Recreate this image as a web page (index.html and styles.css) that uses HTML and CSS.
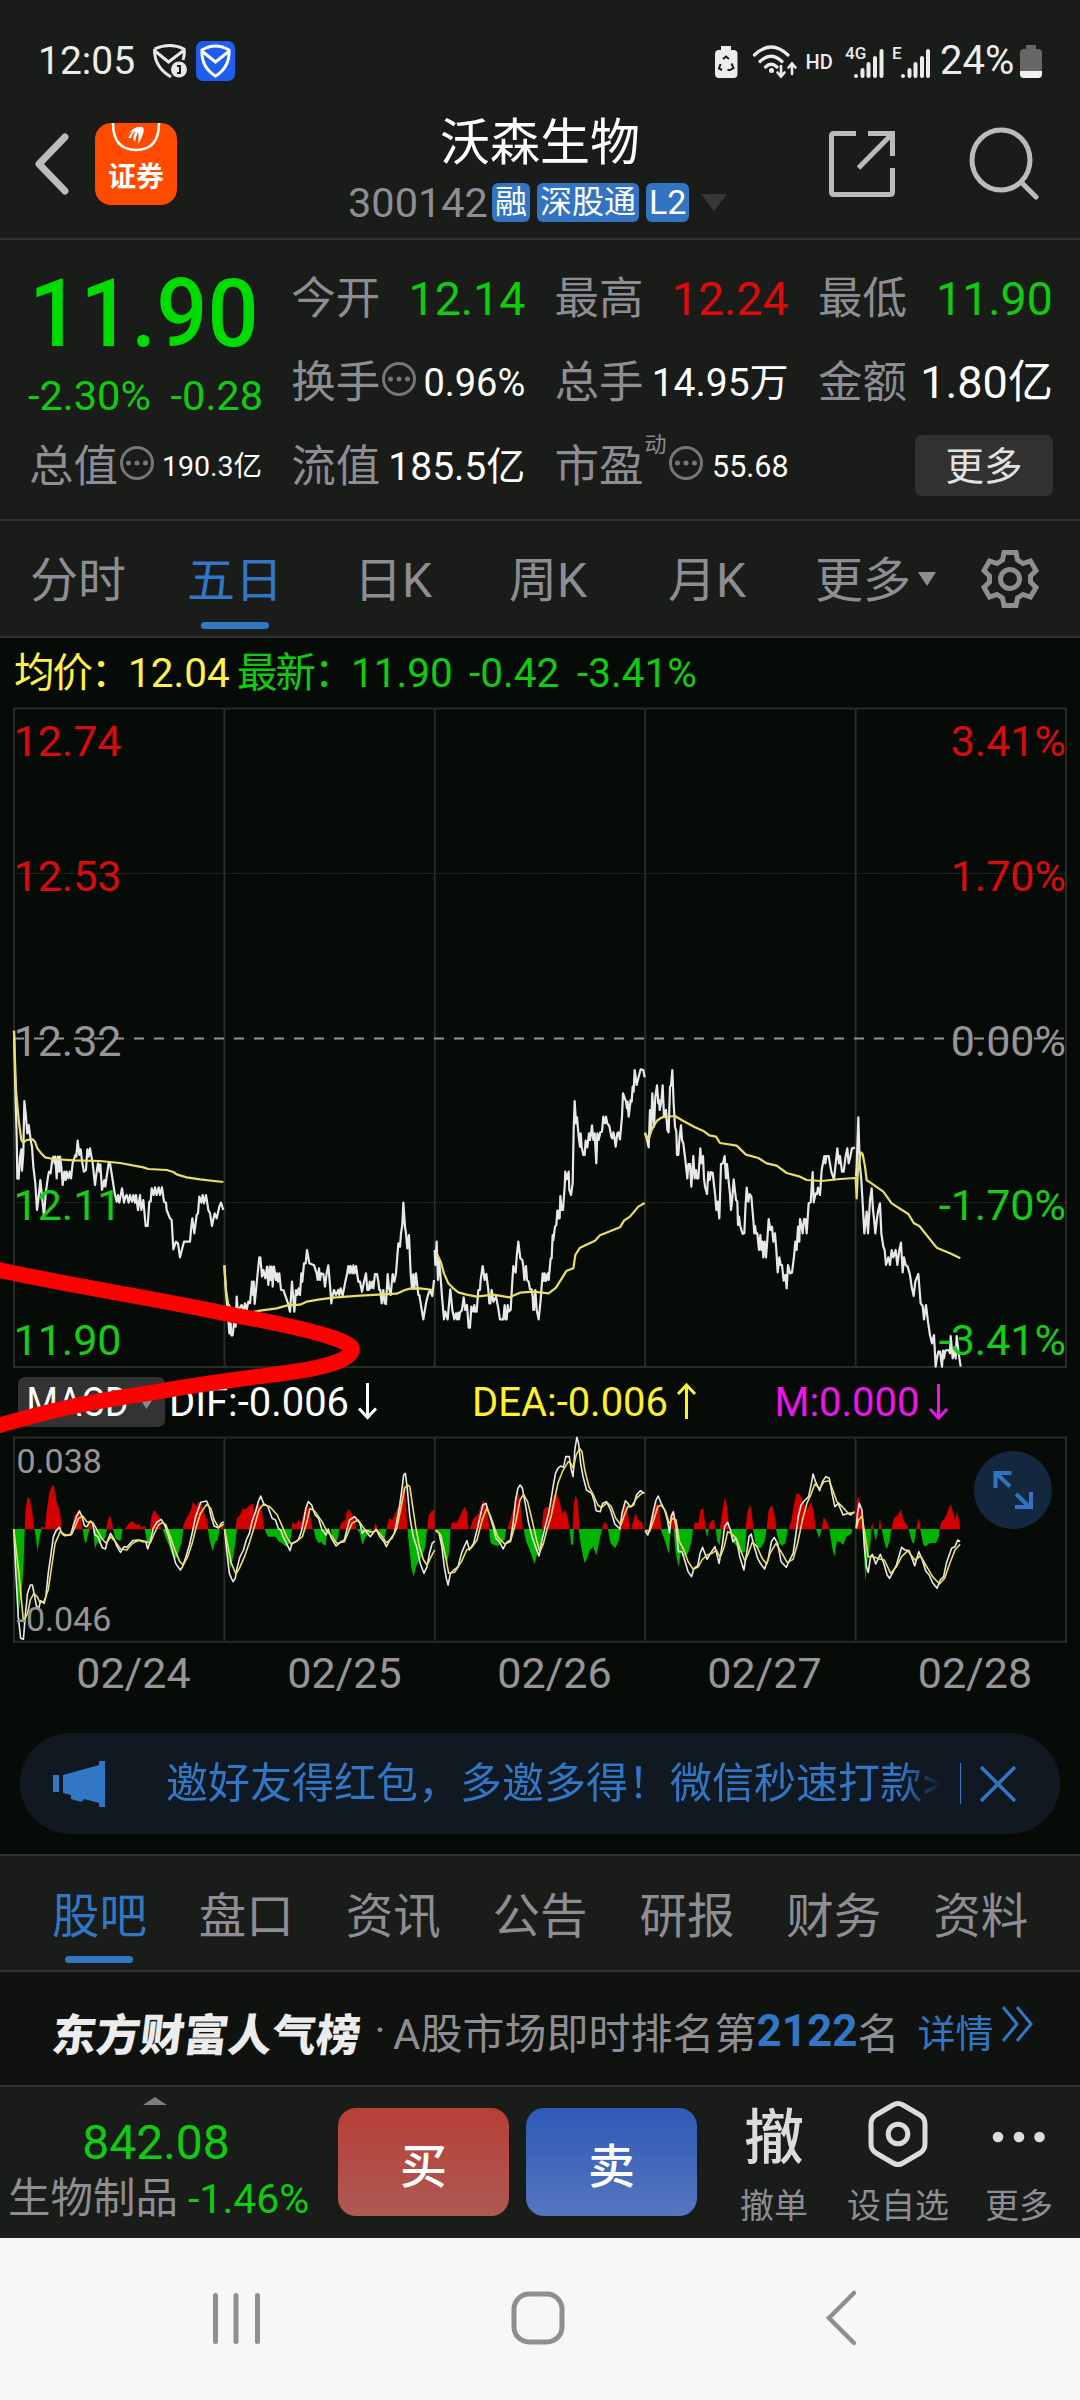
FILE: index.html
```html
<!DOCTYPE html>
<html lang="zh-CN">
<head>
<meta charset="utf-8">
<title>沃森生物 300142</title>
<link rel="stylesheet" href="styles.css">
</head>
<body>
<main class="screen">
  <div class="status">
    <span class="clock">12:05</span>
    <svg class="shield" width="36" height="36" viewBox="0 0 36 36" fill="none" stroke="#e8e8e8" stroke-width="3"><path d="M2.500 6Q18 -1 32 6Q33 11 31 17M2.500 6Q2 24 19 34M3 8L16.500 19L31 8"/><circle cx="27" cy="26.500" r="8" fill="#e8e8e8" stroke="none"/><path d="M25 23h3v7h-3" stroke="#191c19" stroke-width="2"/></svg>
    <svg width="39" height="40" viewBox="0 0 39 40"><rect width="39" height="40" rx="7" fill="#1f5cf0"/><path d="M6 9Q19.500 1 33 9Q34 26 19.500 35Q5 26 6 9ZM7 11L19.500 21L32 11" fill="none" stroke="#fff" stroke-width="3"/></svg>
    <svg class="signals" width="236" height="40" viewBox="710 40 236 40" fill="#ececec">
      <path d="M721 45h10v4h2.500q4 0 4 4v20q0 4-4 4h-14.500q-4 0-4-4v-20q0-4 4-4h2z"/>
      <path d="M720.500 63l-1.500 4.500 3 1.500M723 58l3-2.500 3 2.500M731.500 62.500l2 4.500-3.500 2h-2.500" fill="none" stroke="#191c19" stroke-width="2"/>
      <g fill="none" stroke="#ececec" stroke-width="3.200" stroke-linecap="round"><path d="M754.500 54Q771 38 788 54M760 60.500Q771 50 782 60.500M765.500 66Q771 60.500 777 66"/><path d="M781 65v9M777.500 71.500l3.500 4 3.500-4M792 73v-9M788.500 66.500l3.500-4 3.500 4" stroke-width="2.600"/></g>
      <circle cx="771.500" cy="69.500" r="2.500"/>
      <text x="805.500" y="67.500" font-size="20" font-weight="500">HD</text>
      <text x="845" y="57.500" font-size="17" font-weight="500">4G</text>
      <text x="892" y="57.500" font-size="17" font-weight="500">E</text>
      <g stroke="#ececec" stroke-width="4" stroke-linecap="round"><path d="M856 75v0M862.500 75v-6M868.500 75v-12M875 75v-18M881.500 75v-25M903 75v0M909.500 75v-6M915.500 75v-12M922 75v-18M928 75v-25"/></g>
    </svg>
    <span class="level">24%</span>
    <svg width="22" height="33" viewBox="0 0 22 33"><path d="M6 0h10v4h2q4 0 4 4v21q0 4-4 4H4q-4 0-4-4V8q0-4 4-4h2z" fill="#666866"/><path d="M0 26h22v3q0 4-4 4H4q-4 0-4-4z" fill="#f2f2f2"/></svg>
  </div>

  <header class="top">
    <svg class="back" width="36" height="64" viewBox="0 0 36 64"><path d="M32 5L6 32L32 59" fill="none" stroke="#bdbdbd" stroke-width="7" stroke-linecap="round" stroke-linejoin="round"/></svg>
    <div class="broker">
      <svg width="82" height="34" viewBox="0 0 82 34"><path d="M18 0Q18 27 41 27Q64 27 64 0" fill="none" stroke="#fff" stroke-width="2.500"/><path d="M32 12Q40 2 47 4Q50 5 48 11Q46 17 43 21Q44 11 43 9Q41 13 40 19Q39 17 38 15Q40 10 40 8Q37 11 36 15L33 15Q36 10 38 8Q35 9 32 12Z" fill="#fff"/></svg>
      <b>证券</b>
    </div>
    <div class="title">
      <h1>沃森生物</h1>
      <div class="code"><span>300142</span><i>融</i><i>深股通</i><i>L2</i><svg width="26" height="17" viewBox="0 0 26 17"><path d="M0 0h26L13 17z" fill="#363736"/></svg></div>
    </div>
    <svg class="share" width="68" height="68" viewBox="0 0 68 68" fill="none" stroke="#bbb" stroke-width="5"><path d="M28 3.500H6Q3.500 3.500 3.500 6V62Q3.500 64.500 6 64.500H62Q64.500 64.500 64.500 62V38M40 3.500H64.500V26M64 4L30.500 38"/></svg>
    <svg class="search" width="72" height="74" viewBox="0 0 72 74" fill="none" stroke="#bbb" stroke-width="5"><ellipse cx="33" cy="34" rx="29" ry="30"/><path d="M53 56L68 71" stroke-linecap="round"/></svg>
  </header>

  <section class="quote">
    <div class="now"><strong>11.90</strong><p><span>-2.30%</span><span>-0.28</span></p></div>
    <div class="cell"><label>今开</label><b class="v47 g">12.14</b></div>
    <div class="cell"><label>最高</label><b class="v47 r">12.24</b></div>
    <div class="cell"><label>最低</label><b class="v47 g">11.90</b></div>
    <div class="cell"><label>换手</label><svg class="info" viewBox="0 0 34 34"><circle cx="17" cy="17" r="15.500"/><path d="M8.500 17h0M17 17h0M25.500 17h0"/></svg><b class="v38">0.96%</b></div>
    <div class="cell"><label>总手</label><b class="v39">14.95万</b></div>
    <div class="cell"><label>金额</label><b class="v45">1.80亿</b></div>
    <div class="cell"><label>总值</label><svg class="info" viewBox="0 0 34 34"><circle cx="17" cy="17" r="15.500"/><path d="M8.500 17h0M17 17h0M25.500 17h0"/></svg><b class="v28">190.3亿</b></div>
    <div class="cell"><label>流值</label><b class="v39">185.5亿</b></div>
    <div class="cell"><label>市盈</label><sup>动</sup><svg class="info" viewBox="0 0 34 34"><circle cx="17" cy="17" r="15.500"/><path d="M8.500 17h0M17 17h0M25.500 17h0"/></svg><b class="v30">55.68</b></div>
    <div class="cell end"><button class="more">更多</button></div>
  </section>

  <nav class="periods">
    <a>分时</a><a class="on">五日</a><a>日K</a><a>周K</a><a>月K</a><a>更多<svg width="18" height="14" viewBox="0 0 18 14"><path d="M0 0h18L9 14z" fill="#8e8d93"/></svg></a>
    <svg class="gear" width="60" height="60" viewBox="0 0 60 60" fill="none" stroke="#8e8d93" stroke-width="5"><path d="M24 3.500H36L37.500 11L43 14.500L50.500 12L56 21.500L50.500 27V33L56 38.500L50.500 48L43 45.500L37.500 49L36 56.500H24L22.500 49L17 45.500L9.500 48L4 38.500L9.500 33V27L4 21.500L9.500 12L17 14.500L22.500 11Z"/><circle cx="30" cy="30" r="9.500"/></svg>
  </nav>

  <section class="charts">
    <div class="legend"><span class="y">均价：</span><span class="y n1">12.04</span><span class="g">最新：</span><span class="g n2">11.90</span><span class="g n3">-0.42</span><span class="g">-3.41%</span></div>
    <svg class="plot" width="1080" height="1012" viewBox="0 706 1080 1012">
      <g fill="none" stroke="#292b29" stroke-width="2">
        <path d="M14 708.500H1066V1367H14ZM224.500 708V1367M434.700 708V1367M645.200 708V1367M855.600 708V1367"/>
        <path d="M14 1437.500H1066V1641.700H14ZM224.500 1437V1642M434.700 1437V1642M645.200 1437V1642M855.600 1437V1642"/>
        <path d="M14 873.500H1066M14 1202.500H1066" stroke-width="1" stroke-dasharray="1 1.500" stroke="#3a3c3a"/>
      </g>
      <path d="M14 1038.500H1066" stroke="#969696" stroke-width="2" stroke-dasharray="10 10"/>
      <g class="line white">
        <g transform="translate(0 980) scale(.33333)">
          <polyline points="42,152 46,330 50,470 52,596 56,596 60,530 64,508 66,572 70,520 73,363 77,400 82,460 86,435 92,480 96,500 100,560 106,610 111,690 117,640 121,600 126,650 132,710 137,640 144,590 147,575 152,580 156,545 160,530 164,550 166,530 170,595 174,530 178,575 180,530 184,560 188,615 193,575 197,600 200,575 205,595 209,575 213,595 218,550 226,525 229,530 233,482 238,525 242,508 247,550 252,575 258,570 262,508 266,530 270,505 278,550 285,615 290,575 294,550 298,575 301,553 306,630 313,600 316,620 320,590 326,550 330,550 338,600 344,640 350,665 354,645 358,668 366,625 372,668 376,650 380,645 386,668 390,645 396,665 400,645 405,668 408,645 414,690 420,645 424,690 430,660 437,738 443,738 448,665 452,665 455,625 461,645 465,622 470,645 476,622 480,645 486,622 492,665 498,668 500,690 510,715 515,720 520,808 528,785 534,790 540,832 548,800 552,785 570,785 574,740 577,715 583,760 590,705 594,700 598,650 604,668 608,645 612,670 618,645 625,690 630,700 636,738 644,700 650,715 658,680 663,668 670,690"/>
          <polyline points="673,856 678,940 683,990 688,1060 692,1030 694,1066 698,1066 702,1030 707,1040 710,950 713,990 718,985 725,975 730,995 735,970 740,990 745,965 750,970 756,905 759,945 761,905 764,972 770,910 774,870 778,832 781,832 786,890 790,870 796,895 801,860 805,915 809,860 812,900 815,860 818,920 822,860 828,900 831,880 834,905 838,880 843,930 850,930 857,950 864,970 870,995 876,905 883,995 888,930 892,945 896,925 900,945 904,880 907,905 912,850 917,850 921,810 928,850 942,856 950,880 953,900 957,865 960,900 963,880 970,882 975,920 980,880 985,856 990,915 994,970 998,945 1002,930 1008,945 1015,930 1018,945 1022,925 1028,947 1035,910 1041,882 1045,858 1049,880 1052,858 1057,880 1060,856 1064,880 1068,858 1075,905 1080,905 1086,935 1092,905 1098,880 1102,930 1106,930 1109,905 1112,925 1117,905 1120,925 1125,882 1131,882 1135,905 1138,930 1141,930 1145,970 1150,930 1154,970 1158,972 1163,882 1167,925 1172,945 1178,882 1183,905 1188,880 1195,790 1200,800 1203,760 1207,735 1210,668 1215,740 1218,760 1222,805 1227,765 1232,880 1236,925 1240,882 1243,925 1248,880 1255,945 1258,945 1262,970 1270,1018 1278,970 1284,945 1290,930 1297,948 1302,900"/>
        </g>
        <g transform="translate(420 1020) scale(.33333)"><polyline points="44,690 46,735 50,665 54,780 57,720 61,760 66,830 72,898 76,875 83,898 91,808 97,870 103,898 108,880 111,898 115,878 117,898 120,878 126,870 131,832 136,870 141,855 146,923 150,923 154,860 160,875 163,855 166,875 170,875 175,810 180,810 182,780 188,738 194,780 199,762 205,810 208,850 211,850 215,810 220,845 228,830 234,860 240,898 250,898 254,855 257,898 260,898 263,855 266,875 272,870 276,800 280,738 287,758 290,710 295,665 301,715 307,720 310,740 313,780 318,738 321,780 326,785 330,808 335,808 338,830 340,870 342,870 346,810 350,870 356,898 362,840 366,785 368,760 371,783 374,760 378,783 383,760 386,780 392,715 395,715 398,645 400,660 405,620 409,615 412,572 415,595 417,572 419,595 421,528 425,570 429,570 434,500 436,455 440,478 446,455 448,510 453,525 458,490 461,330 464,243 468,310 471,292 476,350 480,380 482,340 485,380 490,405 494,405 497,362 502,382 507,340 510,360 513,340 516,316 520,360 524,340 529,430 532,340 536,360 541,337 546,335 550,290 555,310 558,290 562,310 568,318 574,350 577,355 580,337 583,350 587,380 592,340 595,337 600,358 606,290 609,220 618,245 621,265 623,245 626,290 632,240 635,245 638,200 641,215 644,150 650,195 656,170 662,148 670,150 674,172"/></g>
        <g transform="translate(640 1020) scale(.33333)">
          <polyline points="15,338 20,355 26,382 30,270 33,330 37,220 42,320 46,230 51,196 55,250 57,240 59,270 64,245 68,196 72,290 78,270 82,330 86,337 90,200 93,196 97,150 101,250 105,320 109,335 111,405 115,405 118,360 123,316 126,360 130,370 136,420 142,475 145,432 150,432 154,500 160,408 164,475 168,450 171,475 175,475 181,385 184,430 189,408 192,475 195,500 201,522 205,456 209,480 213,456 218,458 226,530 229,570 233,545 238,595 243,432 249,430 254,408 258,475 261,432 265,475 270,522 273,570 276,545 281,478 288,540 292,545 294,615 297,590 300,615 308,642 313,640 316,570 320,503 325,545 329,522 334,530 340,600 343,640 345,618 348,640 352,640 357,690 361,645 364,690 367,665 370,712 374,665 378,712 382,660 386,597 391,630 396,620 400,665 405,640 409,690 413,757 418,712 422,735 426,735 431,782 436,765 440,805 444,735 450,760 456,758 462,710 466,665 470,690 474,620 478,665 480,597 485,620 488,640 492,597 496,597 500,640 506,550 512,547 515,500 518,456 521,547 527,520 531,522 534,503 540,525 545,450 553,408 556,430 559,408 566,408 574,455 582,478 592,385 597,430 600,408 606,455 611,455 617,408 622,385 626,430 631,410 636,385 645,383"/>
          <polyline points="648,470 650,440 655,292 659,430 664,480 668,550 673,640 680,575 684,640 690,540 695,505 699,570 702,595 706,640 711,595 715,570 720,550 724,640 730,680 734,690 738,735 745,712 750,735 755,690 760,712 767,690 772,735 778,690 783,668 788,757 792,712 797,735 803,740 810,765 815,800 821,828 826,785 835,762 842,850 848,858 852,898 858,855 864,905 870,945 876,970 882,945 887,1040 890,1018 895,995 900,995 906,1040 909,992 912,1015 916,992 926,990 930,1000 932,948 938,1015 943,990 947,1015 950,948 956,1000 962,1040"/>
        </g>
      </g>
      <g class="line yellow">
        <g transform="translate(0 980) scale(.33333)"><polyline points="42,152 48,330 56,420 64,480 70,488 80,480 98,478 105,485 112,505 122,518 135,532 160,537 220,541 300,543 360,549 430,562 445,567 500,570 520,576 530,583 560,592 600,598 670,606"/><polyline points="673,856 678,930 684,970 700,1000 740,1000 780,992 830,985 862,976 900,974 920,965 960,958 1000,953 1080,947 1190,941 1215,930 1230,926 1260,925 1300,930"/></g>
        <g transform="translate(420 1020) scale(.33333)"><polyline points="50,700 62,725 72,760 85,790 100,805 115,817 140,824 170,830 220,824 268,832 300,818 340,815 386,820 408,803 440,752 460,745 466,705 480,683 525,662 540,646 600,622 612,602 630,590 655,560 674,549"/></g>
        <g transform="translate(640 1020) scale(.33333)"><polyline points="15,340 26,358 35,330 50,303 65,292 105,288 130,303 165,322 192,334 208,346 228,350 240,369 290,377 318,404 355,414 380,430 410,437 440,459 480,470 500,480 545,483 600,477 647,474 650,535 654,450 662,397 668,402 675,440 680,480 690,487 730,515 755,550 805,582 822,610 838,618 890,683 930,700 961,715"/></g>
      </g>
      <g font-size="43">
        <g fill="#d80c0c"><text x="13.500" y="755.500">12.74</text><text x="13.500" y="890.500">12.53</text><text x="1066" y="755.500" text-anchor="end">3.41%</text><text x="1066" y="890.500" text-anchor="end">1.70%</text></g>
        <g fill="#979597"><text x="13.500" y="1056">12.32</text><text x="1066" y="1056" text-anchor="end">0.00%</text></g>
        <g fill="#16cc16"><text x="13.500" y="1220">12.11</text><text x="13.500" y="1355">11.90</text><text x="1066" y="1220" text-anchor="end">-1.70%</text><text x="1066" y="1355" text-anchor="end">-3.41%</text></g>
      </g>

      <rect x="18" y="1377" width="147" height="50" rx="7" fill="#333"/>
      <path d="M140 1399h13l-6.500 10z" fill="#8a8a8a"/>
      <g font-size="40.500"><text x="26.500" y="1416" fill="#fff" textLength="102" lengthAdjust="spacingAndGlyphs">MACD</text><text x="169" y="1416" fill="#fff" textLength="180" lengthAdjust="spacingAndGlyphs">DIF:-0.006</text><text x="472" y="1416" fill="#fff02c" textLength="196" lengthAdjust="spacingAndGlyphs">DEA:-0.006</text><text x="774.500" y="1416" fill="#ee14ea" textLength="145" lengthAdjust="spacingAndGlyphs">M:0.000</text></g>
      <g fill="none" stroke-width="3"><path d="M367.500 1383v34M359 1408.500l8.500 9 8.500-9" stroke="#fff"/><path d="M686.500 1419v-34M678 1394l8.500-9 8.500 9" stroke="#fff02c"/><path d="M938.500 1384v34M930 1409l8.500 9 8.500-9" stroke="#ee14ea"/></g>

      <g transform="translate(0 1360) scale(.34439 .33333)">
        <path fill="#d40000" d="M72,508 74,450 80,412 86,415 92,445 98,490 100,508ZM118,508 120,500 128,502 130,508 136,450 143,400 148,385 155,373 160,400 166,435 172,445 178,490 180,508ZM208,508 215,470 222,460 230,447 234,470 240,508ZM252,508 262,485 268,508ZM308,508 314,480 319,463 325,490 329,508ZM362,508 375,490 385,484 395,495 405,492 410,503 420,497 425,508ZM435,508 440,470 447,450 455,462 463,470 467,508ZM530,508 538,480 548,465 556,445 560,425 570,440 577,425 585,430 595,465 602,480 606,508ZM640,508 645,485 650,508ZM683,508 688,475 697,465 705,445 712,450 720,440 728,435 735,430 739,460 750,425 757,440 762,460 767,508ZM846,508 850,485 858,495 868,480 875,488 882,460 888,440 893,428 899,455 905,490 908,508ZM985,508 990,490 1003,480 1006,460 1012,447 1020,460 1028,470 1033,500 1036,508ZM1084,508 1091,488 1097,508ZM1122,508 1130,475 1140,480 1150,455 1160,430 1168,395 1173,365 1178,410 1183,508ZM1240,508 1245,465 1254,452 1261,450 1262,508ZM1308,508 1314,485 1325,490 1335,470 1348,440 1356,455 1360,508ZM1364,508 1375,475 1388,465 1395,440 1403,420 1412,440 1418,480 1422,508ZM1473,508 1482,480 1490,450 1500,395 1505,400 1512,440 1518,508Z"/>
        <path fill="#00b400" d="M40,507 45,640 52,770 58,730 63,700 68,620 72,507ZM100,507 104,530 109,573 114,540 120,507ZM240,507 246,545 250,550 254,530 260,507ZM270,507 276,567 283,545 290,552 296,540 305,535 310,507ZM328,507 335,535 342,540 350,542 356,507ZM420,507 428,555 436,540 440,507ZM472,507 480,530 490,555 500,585 510,595 515,590 520,570 528,545 532,507ZM603,507 610,545 617,573 625,545 632,540 638,507ZM652,507 656,550 663,600 670,625 677,590 683,550 688,507ZM768,507 778,530 790,530 800,530 810,545 820,550 830,560 840,550 845,530 848,507ZM910,507 917,535 925,550 932,545 940,555 946,555 950,507ZM960,507 967,545 975,550 982,530 985,507ZM1036,507 1045,520 1052,555 1060,535 1066,525 1075,520 1080,507ZM1100,507 1108,530 1115,545 1122,507ZM1183,507 1188,560 1195,625 1201,652 1208,620 1218,600 1225,590 1235,560 1240,507ZM1264,507 1272,520 1282,560 1290,590 1298,612 1305,570 1308,507ZM1420,507 1425,550 1435,555 1445,558 1455,550 1465,540 1470,507ZM1520,507 1528,545 1540,575 1552,612 1560,580 1568,565 1575,530 1576,507Z"/>
      </g>
      <g transform="translate(540 1360) scale(.34439 .33333)">
        <path fill="#d40000" d="M5,508 10,450 20,440 30,445 38,410 45,400 52,410 58,430 64,460 74,450 80,470 86,508ZM95,508 98,430 104,405 110,430 115,508ZM180,508 187,485 195,495 197,508ZM235,508 240,450 248,430 255,460 262,508ZM265,508 270,485 277,460 285,480 295,487 301,508ZM316,508 322,470 332,445 342,425 348,460 352,508ZM375,508 380,460 390,455 395,508ZM445,508 450,487 460,490 466,450 473,445 478,480 482,508ZM488,508 495,485 505,478 510,508ZM522,508 530,450 537,410 543,440 550,508ZM596,508 602,460 610,432 616,470 620,508ZM658,508 664,450 673,435 680,460 687,508ZM722,508 730,480 738,430 745,400 755,405 765,425 772,450 780,440 787,425 795,455 801,508ZM817,508 824,472 835,490 840,508ZM915,508 920,420 925,410 932,440 940,508ZM960,508 965,487 968,508ZM983,508 987,475 992,508ZM1020,508 1028,475 1040,465 1048,447 1055,480 1068,500 1070,508ZM1092,508 1100,475 1106,508ZM1160,508 1165,487 1178,470 1192,433 1200,460 1205,480 1212,455 1218,490 1220,508Z"/>
        <path fill="#00b400" d="M86,507 90,553 96,555 98,507ZM112,507 118,550 125,590 130,610 138,590 145,570 155,560 163,587 172,545 180,507ZM197,507 205,550 218,565 228,545 235,507ZM350,507 360,535 368,560 374,583 380,507ZM388,507 393,570 402,622 410,570 420,590 430,580 440,545 444,507ZM480,507 485,533 490,507ZM510,507 515,545 522,555 527,507ZM551,507 560,545 572,560 582,578 595,577 600,507ZM618,507 628,560 640,565 652,545 658,507ZM685,507 695,550 703,557 712,550 720,507ZM801,507 811,535 818,507ZM840,507 848,560 855,590 862,545 872,545 880,555 890,530 905,520 907,507ZM937,507 942,610 945,663 950,610 960,545 962,507ZM968,507 975,543 982,507ZM992,507 1000,545 1006,567 1015,545 1020,507ZM1070,507 1080,545 1086,552 1092,507ZM1104,507 1112,550 1118,560 1130,550 1150,548 1158,530 1160,507Z"/>
      </g>
      <g class="line thin white">
        <g transform="translate(0 1360) scale(.34439 .33333)">
          <polyline points="40,507 46,640 53,770 60,835 68,838 74,760 80,700 88,675 94,675 99,700 105,735 112,748 118,722 128,730 133,712 140,640 147,590 155,530 163,512 172,502 180,520 187,527 205,525 212,500 222,470 231,453 238,470 245,497 252,500 262,483 268,488 276,525 284,530 290,545 297,563 306,567 313,540 321,520 330,535 340,560 350,577 360,560 368,562 385,542 400,540 415,545 423,545 429,567 437,540 445,505 455,487 468,478 478,495 490,530 500,570 510,610 518,622 524,630 530,620 540,590 550,555 560,510 568,470 575,450 583,427 600,423 607,440 613,470 622,498 635,504 642,490 650,485"/>
          <polyline points="652,507 658,570 666,640 672,655 677,665 683,655 688,625 697,590 707,570 715,540 724,520 733,480 742,455 750,425 757,408 765,430 778,440 790,475 800,480 808,505 815,510 822,530 832,550 842,572 848,550 858,545 866,540 875,515 882,480 888,445 895,425 905,435 915,465 925,475 935,510 947,525 953,507 962,535 976,558 990,545 1000,540 1007,510 1015,480 1030,470 1045,490 1052,520 1060,510 1075,530 1092,508 1103,530 1115,545 1122,560 1132,540 1145,520 1153,480 1160,440 1168,380 1172,345 1177,340 1182,380 1190,470 1200,530 1210,560 1220,610 1231,640 1240,620 1247,580 1255,550 1262,543"/>
          <polyline points="1265,512 1275,520 1283,560 1290,620 1296,655 1301,675 1308,640 1318,630 1330,620 1340,580 1348,560 1356,542 1363,570 1375,550 1385,510 1394,470 1402,435 1411,430 1420,460 1432,500 1440,535 1450,545 1461,567 1470,548 1482,540 1490,490 1497,420 1504,385 1510,375 1517,385 1525,430 1535,490 1545,530 1555,560 1565,588 1573,545 1583,500 1593,460 1600,420 1606,380 1613,340 1620,325 1628,318 1636,322 1643,290 1653,290 1658,325 1664,350 1669,270 1675,232 1680,250 1686,310 1693,350 1703,390 1718,400 1726,425 1731,452 1743,455 1750,430 1761,425 1773,450 1785,492 1800,507 1806,460 1816,422 1823,430 1830,440 1840,435 1848,405 1860,392 1870,400"/>
        </g>
        <g transform="translate(540 1360) scale(.34439 .33333)">
          <polyline points="305,512 313,525 320,500 330,450 337,420 343,408 352,430 362,450 370,480 376,518 381,470 387,455 395,500 402,575 412,575 420,600 430,635 440,650 447,625 458,617 465,580 472,562 485,598 495,580 508,560 520,610 530,550 536,500 545,487 553,510 560,545 570,535 580,590 592,630 600,580 607,530 613,522 622,560 632,595 640,610 652,627 662,600 672,545 680,532 690,550 700,605 715,622 725,600 735,580 742,530 750,470 758,435 770,420 780,410 788,370 793,342 800,365 812,392 820,365 830,350 840,355 848,400 856,440 866,430 880,465 895,460 902,465 913,455"/>
          <polyline points="918,505 922,460 927,430 935,450 942,560 948,620 953,637 960,590 965,583 975,612 988,583 998,610 1008,645 1015,655 1023,640 1035,615 1045,580 1050,562 1060,570 1072,572 1088,617 1100,575 1110,600 1120,633 1130,645 1140,668 1153,685 1162,660 1172,650 1180,610 1195,565 1205,560 1213,540 1220,545"/>
        </g>
      </g>
      <g class="line thin yellow">
        <g transform="translate(0 1360) scale(.34439 .33333)">
          <polyline points="40,507 55,640 68,785 80,760 88,720 98,700 108,710 116,728 128,724 140,690 150,620 160,550 175,515 190,525 208,523 218,500 228,475 240,468 252,485 270,488 282,510 295,535 308,550 322,530 335,545 350,567 368,570 385,550 405,540 425,545 437,548 448,520 460,495 472,487 482,495 495,530 508,570 522,605 532,615 545,590 558,550 570,500 582,460 600,433 612,445 622,480 635,503 650,492"/>
          <polyline points="652,507 662,560 672,610 685,642 695,625 710,590 725,545 740,495 752,450 765,432 785,442 805,465 820,500 832,530 845,552 860,545 878,530 890,490 900,445 915,455 935,485 950,515 965,530 978,550 1000,545 1010,520 1022,490 1040,480 1060,510 1080,517 1095,510 1110,530 1122,548 1138,535 1152,505 1165,440 1175,385 1183,375 1190,380 1197,430 1207,500 1218,560 1230,600 1240,615 1252,590 1262,570"/>
          <polyline points="1265,510 1280,525 1292,580 1303,640 1320,637 1340,605 1355,570 1370,562 1385,540 1400,480 1413,445 1425,470 1445,530 1465,552 1482,545 1497,490 1510,420 1520,403 1532,425 1545,480 1558,540 1568,575 1578,550 1588,510 1600,470 1610,420 1620,370 1633,335 1650,305 1658,310 1665,325 1673,285 1683,265 1690,275 1698,330 1710,380 1723,405 1736,435 1746,443 1763,428 1775,440 1788,475 1803,495 1813,465 1823,440 1833,440 1848,415 1863,400 1872,398"/>
        </g>
        <g transform="translate(540 1360) scale(.34439 .33333)">
          <polyline points="307,510 318,515 330,480 342,440 352,435 365,455 375,490 385,475 395,480 405,545 418,570 430,605 445,628 460,620 470,600 485,585 500,580 512,570 523,592 535,560 545,515 555,520 570,535 582,570 595,603 605,580 617,545 630,560 645,595 658,612 668,580 685,550 700,575 718,608 735,598 748,550 762,480 775,430 788,400 798,372 812,385 825,365 840,362 850,390 862,425 878,440 895,460 913,458"/>
          <polyline points="918,505 925,480 935,468 943,520 953,590 968,590 985,597 1000,600 1018,640 1035,620 1050,590 1068,572 1088,600 1105,588 1120,615 1140,650 1160,672 1175,655 1190,610 1205,570 1220,553"/>
        </g>
      </g>
      <g font-size="34" fill="#979597"><text x="16.500" y="1473">0.038</text><text x="16.500" y="1630.500">-0.046</text></g>
      <g font-size="43" fill="#979597" text-anchor="middle"><text x="133.500" y="1687.500">02/24</text><text x="344.500" y="1687.500">02/25</text><text x="554.500" y="1687.500">02/26</text><text x="764.500" y="1687.500">02/27</text><text x="975" y="1687.500">02/28</text></g>
      <circle cx="1013" cy="1490" r="39" fill="#13273f"/>
      <path d="M995.500 1488v-15h16M997 1474l13 12.500M1031 1492v15h-16M1016 1494l13 12.500" fill="none" stroke="#3274c2" stroke-width="4"/>
      <path d="M-10 1268C60 1284 160 1299 233 1315C310 1329 352 1341 352 1349C352 1358 333 1365 305 1370C270 1376 220 1380 150 1393C80 1403 45 1412 -10 1428" fill="none" stroke="#f00" stroke-width="15.500"/>
    </svg>
    <div class="banner">
      <svg width="52" height="46" viewBox="0 0 52 46" fill="#3276c6"><path d="M0 14h6v17H0zM10 14L46 4V0H52V46H46V42L31 38Q29 42 25 40L18 38V34L10 32z"/></svg>
      <p>邀好友得红包，多邀多得！微信秒速打款&gt;</p>
      <i></i>
      <svg width="36" height="36" viewBox="0 0 36 36"><path d="M1 1L35 35M35 1L1 35" stroke="#3276c6" stroke-width="3.500"/></svg>
    </div>
  </section>

  <nav class="tabs"><a class="on">股吧</a><a>盘口</a><a>资讯</a><a>公告</a><a>研报</a><a>财务</a><a>资料</a></nav>

  <section class="rank">
    <em>东方财富人气榜</em><span class="dot">·</span><span class="txt">A股市场即时排名第</span><b>2122</b><span class="txt">名</span><span class="detail">详情</span>
    <svg width="34" height="36" viewBox="0 0 34 36"><path d="M2 1L16 18L2 35M16 1L30 18L16 35" fill="none" stroke="#3276c6" stroke-width="3"/></svg>
  </section>

  <footer class="trade">
    <div class="sector"><svg width="24" height="8" viewBox="0 0 24 8"><path d="M12 0L24 8H0z" fill="#7d7d82"/></svg><b>842.08</b><p>生物制品<span>-1.46%</span></p></div>
    <button class="buy">买</button><button class="sell">卖</button>
    <div class="act a1"><div class="pic big">撤</div><span>撤单</span></div>
    <div class="act a2"><div class="pic"><svg width="60" height="68" viewBox="0 0 60 68" fill="none" stroke="#dcdcdc" stroke-width="5"><path d="M25 5Q30 2 35 5L52 15Q57 18 57 24V44Q57 50 52 53L35 63Q30 66 25 63L8 53Q3 50 3 44V24Q3 18 8 15Z"/><circle cx="30" cy="34" r="9.800"/></svg></div><span>设自选</span></div>
    <div class="act a3"><div class="pic"><svg width="54" height="12" viewBox="0 0 54 12" fill="#dcdcdc"><circle cx="6" cy="6" r="5.300"/><circle cx="27" cy="6" r="5.300"/><circle cx="47.500" cy="6" r="5.300"/></svg></div><span>更多</span></div>
  </footer>

  <div class="sysnav">
    <svg width="50" height="54" viewBox="0 0 50 54"><path d="M4.500 4.500v46M25 4.500v46M46.500 4.500v46" stroke="#8e908e" stroke-width="5" stroke-linecap="round"/></svg>
    <svg width="54" height="54" viewBox="0 0 54 54"><rect x="3" y="3" width="48" height="48" rx="15" fill="none" stroke="#8e908e" stroke-width="5"/></svg>
    <svg width="34" height="58" viewBox="0 0 34 58"><path d="M29 4L4 29L29 54" fill="none" stroke="#8e908e" stroke-width="4.500" stroke-linecap="round"/></svg>
  </div>
</main>
</body>
</html>
```
FILE: styles.css
```css
* { box-sizing: border-box; }
body { margin: 0; background: #191c19; font-family: Roboto, "Noto Sans CJK SC", sans-serif; color: #fff; }
h1, p { margin: 0; font-weight: 400; }
b, i, em { font-weight: 400; font-style: normal; }
svg { display: block; flex: none; }
text { font-family: Roboto, "Noto Sans CJK SC", sans-serif; }
button { border: 0; padding: 0; font: inherit; color: #fff; }
.screen { width: 1080px; height: 2400px; overflow: hidden; display: flex; flex-direction: column; white-space: nowrap; }
.screen > * { flex: none; }
.g { color: #10cc10; }
.r { color: #dc0c0c; }
.y { color: #fff04a; }

.status { height: 82px; padding: 40px 0 0 38px; display: flex; align-items: center; color: #ececec; font-size: 39px; line-height: 42px; }
.clock { width: 114px; }
.shield { margin: 0 8px 0 0; }
.signals { margin-left: 475px; }
.level { width: 80px; margin-left: -6px; font-size: 40px; }

.top { height: 158px; display: flex; border-bottom: 2px solid #303230; }
.back { margin: 50px 0 0 33px; }
.broker { width: 82px; height: 82px; margin: 41px 0 0 26px; border-radius: 16px; background: #ff4a00; overflow: hidden; text-align: center; }
.broker b { display: block; font: 700 28px/36px "Noto Sans CJK SC", sans-serif; }
.title { width: 380px; margin: 31px 0 0 171px; }
.title h1 { font-size: 50px; line-height: 60px; padding-left: 92px; }
.code { display: flex; align-items: center; margin-top: 9px; height: 41px; }
.code span { width: 144px; font-size: 41.500px; line-height: 42px; color: #8e8d93; }
.code i { margin-right: 7px; height: 39px; padding: 0 3px; border-radius: 6px; background: #3274c2; font-size: 32px; line-height: 39px; }
.code i:nth-of-type(3) { font-size: 34px; }
.code svg { margin-left: 5px; }
.share { margin: 48px 0 0 100px; }
.search { margin: 44px 0 0 72px; }

.quote { height: 281px; padding: 17px 27px 0 29px; display: grid; grid-template-columns: 233px 234px 234px 235px; column-gap: 29.300px; grid-template-rows: 84px 84px 84px; border-bottom: 2px solid #303230; }
.now { grid-row: span 2; color: #10cc10; }
.now strong { display: block; height: 112px; font-size: 90px; line-height: 114px; font-weight: 500; color: #00dc00; transform: scaleY(1.06); }
.now p { display: flex; justify-content: space-between; margin: 5px -1px 0 -1px; font-size: 41.500px; line-height: 44px; }
.cell { display: flex; align-items: center; }
.cell label { font-size: 44.500px; line-height: 60px; color: #8e8d93; }
.cell b { margin-left: auto; line-height: 60px; }
.cell sup { align-self: flex-start; font-size: 22px; line-height: 26px; margin: 7px 0 0 1px; color: #8e8d93; }
.info { width: 34px; height: 34px; margin: -8px 0 0 2px; fill: none; stroke: #77757a; stroke-width: 3; }
.info path { stroke-width: 5; stroke-linecap: round; }
.v47 { font-size: 46.500px; } .v45 { font-size: 45px; } .v39 { font-size: 39px; } .v38 { font-size: 38px; } .v30 { font-size: 30.500px; } .v28 { font-size: 28.500px; }
.end { justify-content: flex-end; }
.more { width: 138px; height: 61px; margin-top: -4px; padding-bottom: 4px; border-radius: 7px; background: #323232; color: #e2e2e2; font-size: 38.500px; }

.periods { height: 117px; padding-left: 30px; display: flex; border-bottom: 2px solid #303230; font-size: 48px; line-height: 120px; color: #8e8d93; }
.periods a { width: 159px; height: 116px; padding-top: 4px; display: flex; align-items: center; }
.periods a:nth-child(1) { width: 157px; }
.periods a:nth-child(2) { width: 167px; }
.periods a:nth-child(3) { width: 155px; }
.periods a:nth-child(5) { width: 147px; }
.periods a:nth-child(6) { width: 168px; }
.periods a svg { margin: 0 0 4px 7px; }
.on { position: relative; color: #3276c6; }
.on::after { content: ""; position: absolute; left: 14px; bottom: 8px; width: 68px; height: 7px; border-radius: 4px; background: #3276c6; }
.gear { margin: 28px 0 0 -3px; }

.charts { height: 1216px; background: #060b08; }
.legend { height: 68px; padding: 1px 0 0 14px; display: flex; font-size: 40.500px; line-height: 68px; }
.legend span:nth-child(odd) { width: 114px; }
.legend .n1 { width: 109px; }
.legend .n2 { width: 118px; }
.legend span.n3 { width: 108px; }
.legend .g:nth-child(3) { letter-spacing: -2px; }
.legend .y:first-child { letter-spacing: -2px; }
.line { fill: none; stroke-width: 2.200; stroke-linejoin: round; }
.line polyline { vector-effect: non-scaling-stroke; }
.thin { stroke-width: 1.600; }
.white { stroke: #e8e8e8; }
.yellow { stroke: #eadf65; }
.banner { height: 101px; margin: 15px 20px 0; padding: 0 44px 0 33px; border-radius: 50px; background: #101822; display: flex; align-items: center; }
.banner p { width: 778px; margin-left: 61px; overflow: hidden; color: #3276c6; font-size: 42px; line-height: 80px; -webkit-mask-image: linear-gradient(90deg, #000 735px, transparent 776px); mask-image: linear-gradient(90deg, #000 735px, transparent 776px); }
.banner i { width: 1px; height: 41px; margin: 0 19px 0 16px; background: #3276c6; }

.tabs { height: 118px; padding-left: 52px; display: flex; border-top: 2px solid #303230; border-bottom: 2px solid #303230; font-size: 47.500px; line-height: 122px; color: #8e8d93; }
.tabs a { width: 147px; height: 116px; }
.tabs .on::after { left: 13px; bottom: 9px; }
.rank { height: 113px; padding: 3px 0 0 53px; display: flex; align-items: center; background: #0f120f; font-size: 42px; color: #8e8d93; }
.rank em { width: 314px; padding-top: 3px; font-weight: 900; font-size: 44px; transform: skewX(-7deg); color: #ececec; }
.rank .dot { width: 26px; text-align: center; }
.rank b { padding-top: 2px; font-weight: 700; font-size: 44px; color: #3276c6; }
.rank .detail { margin: 0 8px 0 18px; color: #3276c6; font-size: 38px; }
.rank svg { margin-bottom: 12px; }

.trade { height: 153px; display: flex; border-top: 2px solid #303230; }
.sector { width: 338px; padding: 10px 0 0 8px; color: #10cc10; }
.sector svg { margin-left: 135px; }
.sector b { display: block; width: 296px; margin-top: 12px; text-align: center; font-size: 48px; line-height: 52px; }
.sector p { font-size: 42.500px; line-height: 60px; color: #8e8d93; }
.sector span { margin-left: 10px; font-size: 41px; color: #10cc10; }
.trade button { width: 171px; height: 108px; margin-top: 21px; border-radius: 18px; font-size: 47px; font-weight: 500; }
.buy { background: linear-gradient(#b73f37, #ad5a54); }
.trade .sell { margin-left: 17px; background: linear-gradient(#2f5ab8, #5675bf); }
.act { text-align: center; color: #8e8d93; font-size: 34px; }
.act span { display: block; line-height: 50px; margin-top: 4px; }
.pic { height: 80px; margin-top: 10px; display: flex; align-items: center; justify-content: center; }
.big { margin-top: 5px; margin-bottom: 9px; font-size: 60px; font-weight: 500; color: #dcdcdc; }
.a1 { width: 110px; margin-left: 22px; }
.a2 { width: 130px; margin-left: 4px; }
.a2 .pic { margin-top: 7px; margin-bottom: 7px; }
.a3 { width: 110px; margin-left: 1px; }
.a3 .pic { margin-top: 10px; margin-bottom: 4px; }
.sysnav { height: 163px; display: flex; align-items: center; padding: 0 0 3px 211px; background: #f7f7f7; }
.sysnav svg:nth-child(2) { margin-left: 250px; }
.sysnav svg:nth-child(3) { margin-left: 260px; }
```
